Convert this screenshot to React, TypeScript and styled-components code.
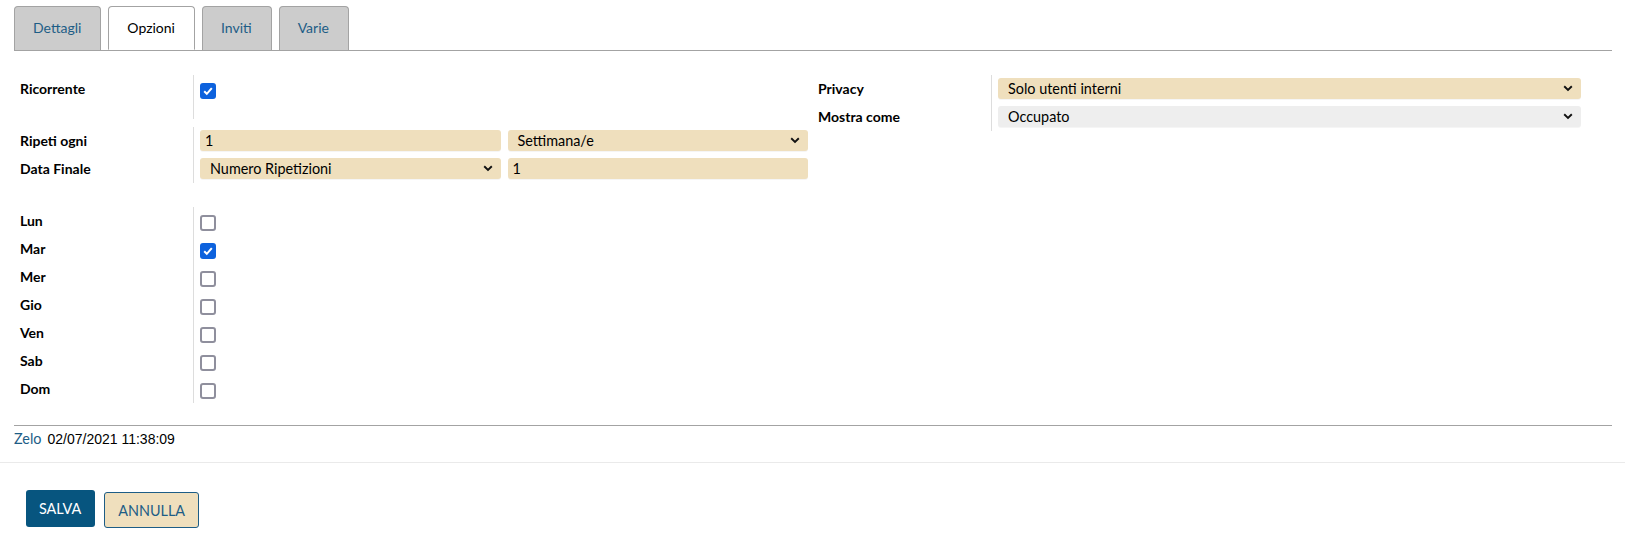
import * as React from 'react';
import styled, { createGlobalStyle } from 'styled-components';

const GlobalStyle = createGlobalStyle`
  html, body {
    margin: 0;
    padding: 0;
    background: #fff;
  }
  body {
    font-family: Lato, "Open Sans", sans-serif;
    font-size: 14px;
    color: #000;
  }
`;

const BLUE = '#1d5d86';
const BEIGE = '#efdfbd';

type Row = { label: string; checked?: boolean };

const days: Row[] = [
  { label: 'Lun' },
  { label: 'Mar', checked: true },
  { label: 'Mer' },
  { label: 'Gio' },
  { label: 'Ven' },
  { label: 'Sab' },
  { label: 'Dom' },
];

const tabs = ['Dettagli', 'Opzioni', 'Inviti', 'Varie'];

const Chevron = () => (
  <svg width="10" height="7" viewBox="0 0 10 7">
    <path d="M1.2 1.3 L5 5 L8.8 1.3" fill="none" stroke="#111" strokeWidth="1.9" />
  </svg>
);

const Check = ({ checked }: { checked?: boolean }) => (
  <CheckBox checked={checked}>
    {checked && (
      <svg width="12" height="12" viewBox="0 0 12 12">
        <path d="M2.2 6.3 L4.8 8.8 L9.8 3.2" fill="none" stroke="#fff" strokeWidth="2" />
      </svg>
    )}
  </CheckBox>
);

export default function App() {
  return (
    <>
      <GlobalStyle />
      <Page>
        <TabBar>
          {tabs.map(t => (
            <Tab key={t} active={t === 'Opzioni'}>
              {t}
            </Tab>
          ))}
        </TabBar>

        <Form>
          <LeftCol>
            <Group>
              <Labels>
                <Label>Ricorrente</Label>
              </Labels>
              <Fields>
                <CheckRow>
                  <Check checked />
                </CheckRow>
              </Fields>
            </Group>

            <Group gap={8}>
              <Labels>
                <Label>Ripeti ogni</Label>
                <Label>Data Finale</Label>
              </Labels>
              <Fields>
                <FieldRow>
                  <Input>1</Input>
                  <Select>
                    <span>Settimana/e</span>
                    <Chevron />
                  </Select>
                </FieldRow>
                <FieldRow>
                  <Select>
                    <span>Numero Ripetizioni</span>
                    <Chevron />
                  </Select>
                  <Input>1</Input>
                </FieldRow>
              </Fields>
            </Group>

            <Group gap={24}>
              <Labels>
                {days.map(d => (
                  <Label key={d.label}>{d.label}</Label>
                ))}
              </Labels>
              <Fields>
                {days.map(d => (
                  <CheckRow key={d.label}>
                    <Check checked={d.checked} />
                  </CheckRow>
                ))}
              </Fields>
            </Group>
          </LeftCol>

          <RightCol>
            <Group>
              <Labels>
                <Label>Privacy</Label>
                <Label>Mostra come</Label>
              </Labels>
              <Fields>
                <FieldRow>
                  <Select>
                    <span>Solo utenti interni</span>
                    <Chevron />
                  </Select>
                </FieldRow>
                <FieldRow>
                  <Select grey>
                    <span>Occupato</span>
                    <Chevron />
                  </Select>
                </FieldRow>
              </Fields>
            </Group>
          </RightCol>
        </Form>

        <Footer>
          <Author>Zelo</Author>
          <Stamp>02/07/2021 11:38:09</Stamp>
        </Footer>
      </Page>

      <Actions>
        <PrimaryButton>SALVA</PrimaryButton>
        <SecondaryButton>ANNULLA</SecondaryButton>
      </Actions>
    </>
  );
}

const Page = styled.div`
  padding: 6px 13px 0 14px;
`;

const TabBar = styled.div`
  display: flex;
  gap: 7px;
  height: 44px;
  border-bottom: 1px solid #a3a3a3;
`;

const Tab = styled.div<{ active?: boolean }>`
  display: flex;
  align-items: center;
  padding: 0 19px 2px 18px;
  height: 44px;
  box-sizing: border-box;
  border: 1px solid #a3a3a3;
  border-bottom: ${p => (p.active ? '1px solid #fff' : 'none')};
  border-radius: 4px 4px 0 0;
  background: ${p => (p.active ? '#fff' : '#cccccc')};
  color: ${p => (p.active ? '#000' : BLUE)};
  font-size: 14px;
`;

const Form = styled.div`
  display: flex;
  padding-top: 24px;
`;

const LeftCol = styled.div`
  width: 794px;
  display: flex;
  flex-direction: column;
`;

const RightCol = styled.div`
  margin-left: 4px;
  width: 769px;
`;

const Group = styled.div<{ gap?: number }>`
  display: grid;
  grid-template-columns: 179px 1fr;
  margin-top: ${p => p.gap || 0}px;
`;

const Labels = styled.div`
  display: flex;
  flex-direction: column;
  padding-left: 6px;
`;

const Label = styled.div`
  height: 28px;
  line-height: 28px;
  font-weight: bold;
  font-size: 14px;
`;

const Fields = styled.div`
  border-left: 1px solid #dddddd;
  padding-left: 6px;
  display: flex;
  flex-direction: column;
`;

const CheckRow = styled.div`
  height: 28px;
  padding-top: 8px;
  box-sizing: border-box;
  &:only-child {
    height: 44px;
  }
`;

const CheckBox = styled.div<{ checked?: boolean }>`
  width: 16px;
  height: 16px;
  box-sizing: border-box;
  border-radius: 3px;
  border: ${p => (p.checked ? 'none' : '2px solid #8f8f9d')};
  background: ${p => (p.checked ? '#0d62dd' : '#fff')};
  display: flex;
  align-items: center;
  justify-content: center;
`;

const FieldRow = styled.div`
  height: 28px;
  padding-top: 3px;
  box-sizing: border-box;
  display: grid;
  grid-auto-flow: column;
  grid-auto-columns: 1fr;
  column-gap: 7px;
  align-items: start;
`;

const Input = styled.div`
  min-width: 0;
  box-sizing: border-box;
  height: 21px;
  line-height: 21px;
  border-radius: 3px;
  background: ${BEIGE};
  padding: 0 5px;
  font-size: 14.4px;
  box-shadow: 0 1px 0 rgba(0, 0, 0, 0.04);
`;

const Select = styled.div<{ grey?: boolean }>`
  min-width: 0;
  box-sizing: border-box;
  height: 21px;
  border-radius: 3px;
  background: ${p => (p.grey ? '#eeeeee' : BEIGE)};
  padding: 0 8px 0 10px;
  font-size: 14.4px;
  display: flex;
  align-items: center;
  justify-content: space-between;
  box-shadow: 0 1px 0 rgba(0, 0, 0, 0.04);
`;

const Footer = styled.div`
  margin-top: 22px;
  border-top: 1px solid #a3a3a3;
  padding: 4px 0 15px;
  display: flex;
  align-items: baseline;
  gap: 6px;
`;

const Author = styled.span`
  color: ${BLUE};
  font-size: 14.4px;
`;

const Stamp = styled.span`
  font-family: "Liberation Sans", Arial, sans-serif;
  font-size: 14px;
`;

const Actions = styled.div`
  border-top: 1px solid #eaeaea;
  padding: 27px 26px;
  display: flex;
  gap: 9px;
  align-items: flex-start;
`;

const PrimaryButton = styled.button`
  font-family: Lato, sans-serif;
  font-size: 14.4px;
  height: 37px;
  padding: 0 14px 0 13px;
  border: none;
  border-radius: 3px;
  background: #07557f;
  color: #fff;
`;

const SecondaryButton = styled.button`
  font-family: Lato, sans-serif;
  font-size: 14.4px;
  height: 36px;
  margin-top: 2px;
  padding: 0 13px;
  border: 1px solid ${BLUE};
  border-radius: 3px;
  background: ${BEIGE};
  color: ${BLUE};
`;
